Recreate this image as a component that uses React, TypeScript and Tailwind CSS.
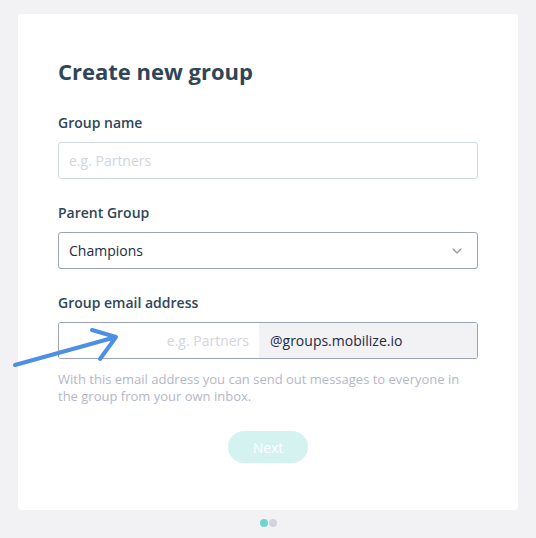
import { ChevronDown } from 'lucide-react';

export default function App() {
  return (
    <div className="relative min-h-[538px] w-[536px] bg-[#f2f2f4] pt-[14px] font-['Open_Sans',sans-serif]">
      <div className="mx-[18px] h-[496px] rounded-[4px] bg-white px-[40px] pt-[42px]">
        <h1 className="text-[22px] font-bold leading-[30px] text-[#2f4558]">Create new group</h1>

        <label className="mt-[27px] block text-[14px] font-semibold leading-[20px] text-[#2f4558]">Group name</label>
        <div className="mt-[9px] flex h-[37px] items-center rounded-[3px] border border-[#cdd9dd] px-[10px] text-[14px] text-[#d2d5dc]">
          e.g. Partners
        </div>

        <label className="mt-[24px] block text-[14px] font-semibold leading-[20px] text-[#2f4558]">Parent Group</label>
        <div className="mt-[9px] flex h-[37px] items-center justify-between rounded-[3px] border border-[#9ea2b8] pl-[10px] pr-[12px] text-[14px] text-[#1d2a44]">
          <span>Champions</span>
          <ChevronDown className="h-[16px] w-[16px] text-[#8e93a3]" strokeWidth={1.75} />
        </div>

        <label className="mt-[24px] block text-[14px] font-semibold leading-[20px] text-[#2f4558]">Group email address</label>
        <div className="mt-[9px] flex h-[37px] overflow-hidden rounded-[3px] border border-[#9ea2b8] text-[14px]">
          <div className="flex w-[200px] items-center justify-end bg-white pr-[10px] text-[#d2d5dc]">e.g. Partners</div>
          <div className="flex flex-1 items-center bg-[#f2f2f5] pl-[11px] text-[#1d2a44]">@groups.mobilize.io</div>
        </div>
        <p className="mt-[12px] text-[13px] leading-[17px] text-[#b4b7c6]">
          With this email address you can send out messages to everyone in the group from your own inbox.
        </p>

        <div className="mt-[26px] flex justify-center">
          <button className="h-[32px] w-[80px] rounded-full bg-[#d4f2ef] text-[14px] text-white">Next</button>
        </div>
      </div>

      <div className="mt-[9px] flex justify-center gap-[1px]">
        <span className="h-[8px] w-[8px] rounded-full bg-[#6dd6cb]" />
        <span className="h-[8px] w-[8px] rounded-full bg-[#d3d3dc]" />
      </div>

      <svg className="absolute left-0 top-0" width="536" height="538" viewBox="0 0 536 538" fill="none">
        <path
          d="M15 365 L116 337 M92 330 L116 337 L100 359"
          stroke="#4d8fe4"
          strokeWidth="4"
          strokeLinecap="round"
          strokeLinejoin="round"
        />
      </svg>
    </div>
  );
}
